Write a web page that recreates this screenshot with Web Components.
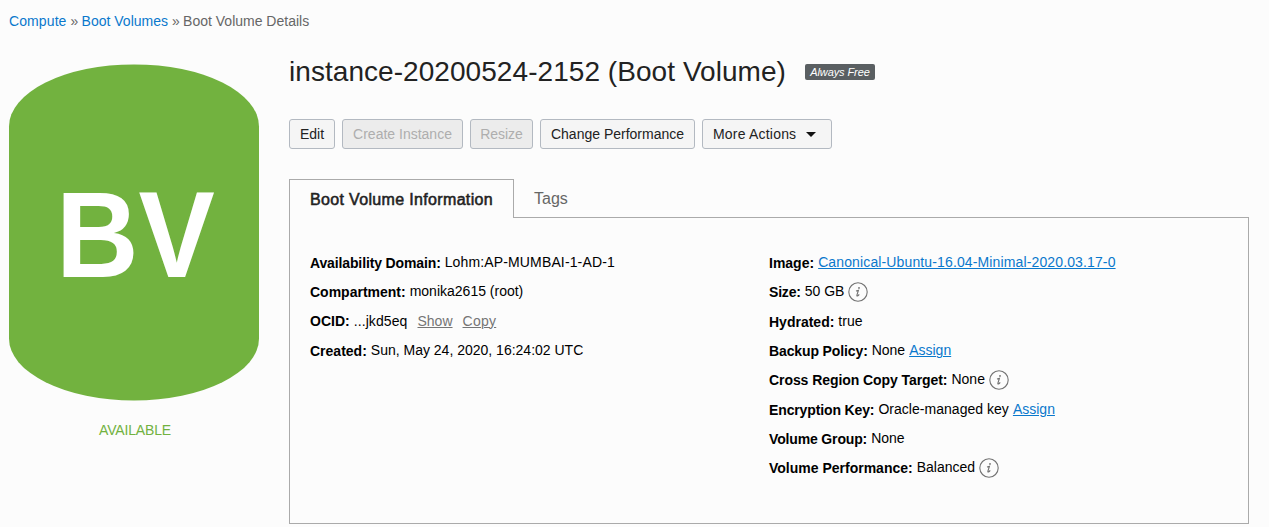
<!DOCTYPE html>
<html lang="en">
<head>
<meta charset="utf-8">
<title>Boot Volume Details</title>
<style>
html,body{margin:0;height:527px;overflow:hidden;background:#fcfcfc}
body{font:14px/20px "Liberation Sans",Arial,sans-serif;color:#000}
</style>
</head>
<body>
<volume-page></volume-page>
<script>
function define(name, html, setup) {
  const template = document.createElement('template');
  template.innerHTML = html;
  customElements.define(name, class extends HTMLElement {
    constructor() {
      super();
      this.attachShadow({mode: 'open'}).append(template.content.cloneNode(true));
    }
    connectedCallback() { if (setup) setup(this, this.shadowRoot); }
  });
}

define('text-link', `<style>
:host{display:inline-block;color:#0a78cc}
:host([underlined]){text-decoration:underline;text-decoration-thickness:1px;text-underline-offset:1px}
:host([muted]){color:#757575}
</style><slot></slot>`);

define('bread-crumbs', `<style>
:host{display:flex;gap:4px;height:20px;color:#666;white-space:nowrap}
</style><slot></slot>`);

define('resource-badge', `<style>
:host{display:flex;flex-direction:column;width:250px}
.shape{height:336px;background:#72b23f;border-radius:125px/62px;transform:translateY(-.6px);display:flex;align-items:center;justify-content:center;color:#fff;font:bold 123px/140px "Liberation Sans",Arial,sans-serif}
.shape span{margin-top:5px;margin-left:2px;transform:scaleX(.93)}
.state{margin-top:19px;text-align:center;color:#72b23f;padding-left:2px;letter-spacing:-.16px}
</style><div class="shape"><span><slot></slot></span></div><div class="state"><slot name="state"></slot></div>`);

define('free-tag', `<style>
:host{display:block;box-sizing:border-box;width:70px;height:16px;border-radius:2px;background:#5a5f62;color:#fff;font:italic 11px/16px "Liberation Sans",Arial,sans-serif;letter-spacing:-.1px;text-align:center;white-space:nowrap}
</style><slot></slot>`);

define('action-button', `<style>
:host{display:block}
button{display:flex;align-items:center;justify-content:center;box-sizing:border-box;width:var(--w);height:30px;padding:0;border:1px solid #b3b9c1;border-radius:3px;background:#f5f5f5;color:#222;font:inherit;letter-spacing:inherit;white-space:nowrap}
:host([disabled]) button{background:#ececec;color:#aeaeae}
svg{display:none;margin-left:10px}
:host([menu]) svg{display:block}
:host([menu]) button{justify-content:flex-start;padding-left:10px}
</style><button><slot></slot><svg width="10" height="5" viewBox="0 0 10 5"><path d="M0 0h10L5 5z" fill="#111"/></svg></button>`, (host, root) => {
  root.querySelector('button').disabled = host.hasAttribute('disabled');
});

define('info-icon', `<style>
:host{display:block;width:20px;height:20px;margin-top:1px}svg{display:block}
</style><svg width="20" height="20" viewBox="0 0 20 20" fill="none" stroke="#737373"><circle cx="10" cy="10" r="9.2" stroke-width="1.1"/><path d="M8 9 10.4 8.3 9 12.8q-.4 1.4.4 1.2.9-.3 1.8-1.6" stroke-width="1.15"/><circle cx="11" cy="5.9" r=".95" fill="#737373" stroke="none"/></svg>`);

define('detail-row', `<style>
:host{display:flex;height:29.33px;gap:4px;white-space:nowrap;align-items:flex-start}
.label{font-weight:bold;padding-top:var(--drop,1px);letter-spacing:var(--ls,0)}
.value{display:flex;gap:4px}
</style><span class="label"><slot name="label"></slot></span><span class="value"><slot></slot></span>`);

define('tab-panel', `<style>
:host{display:flex;flex-direction:column;width:960px;height:345px}
.tabs{display:flex;height:39px;font-size:16px;line-height:38px}
.active{box-sizing:border-box;width:225px;height:39px;border:1px solid #aaa;border-bottom:0;padding:1px 0 0 20px;color:#222;-webkit-text-stroke:.55px #222;letter-spacing:.34px;white-space:nowrap}
.rest{flex:1;box-sizing:border-box;border-bottom:1px solid #aaa;padding:1px 0 0 20px;height:39px;color:#666}
.body{flex:1;display:flex;border:1px solid #aaa;border-top:0;padding:34px 20px 0}
.col{width:459px}
</style>
<div class="tabs"><div class="active"><slot name="active"></slot></div><div class="rest"><slot name="tab"></slot></div></div>
<div class="body"><div class="col"><slot name="left"></slot></div><div class="col"><slot name="right"></slot></div></div>`);

define('volume-page', `<style>
:host{display:block;padding:11px 0 0 9px}
.layout{display:flex;gap:30px;margin-top:25px}
resource-badge{margin-top:9px}
main{display:flex;flex-direction:column;margin-top:-4px}
.title{display:flex;align-items:center;height:40px}
h1{margin:0;width:516px;font-weight:normal;font-size:28px;line-height:40px;letter-spacing:.055px;color:#222;white-space:nowrap}
.actions{display:flex;gap:7px;margin:27px 0 30px}
</style>
<bread-crumbs><text-link style="letter-spacing:.1px">Compute</text-link><span style="letter-spacing:-.7px">»</span><text-link>Boot Volumes</text-link><span style="letter-spacing:-.7px">»</span><span>Boot Volume Details</span></bread-crumbs>
<div class="layout">
<resource-badge>BV<span slot="state">AVAILABLE</span></resource-badge>
<main>
<div class="title"><h1>instance-20200524-2152 (Boot Volume)</h1><free-tag>Always Free</free-tag></div>
<div class="actions">
<action-button style="--w:46px">Edit</action-button>
<action-button style="--w:121px" disabled>Create Instance</action-button>
<action-button style="--w:63px;letter-spacing:-.05px" disabled>Resize</action-button>
<action-button style="--w:155px">Change Performance</action-button>
<action-button style="--w:130px;letter-spacing:.2px" menu>More Actions</action-button>
</div>
<tab-panel>
<span slot="active">Boot Volume Information</span><span slot="tab">Tags</span>
<div slot="left">
<detail-row style="--ls:-.13px"><span slot="label">Availability Domain:</span><span style="letter-spacing:.14px">Lohm:AP-MUMBAI-1-AD-1</span></detail-row>
<detail-row><span slot="label">Compartment:</span><span>monika2615 (root)</span></detail-row>
<detail-row style="--drop:0px"><span slot="label">OCID:</span><span style="letter-spacing:.1px">...jkd5eq</span><text-link underlined muted style="margin-left:6px">Show</text-link><text-link underlined muted style="margin-left:6px;letter-spacing:.25px">Copy</text-link></detail-row>
<detail-row><span slot="label">Created:</span><span>Sun, May 24, 2020, 16:24:02 UTC</span></detail-row>
</div>
<div slot="right">
<detail-row><span slot="label">Image:</span><text-link underlined style="letter-spacing:.13px">Canonical-Ubuntu-16.04-Minimal-2020.03.17-0</text-link></detail-row>
<detail-row style="--ls:-.2px"><span slot="label">Size:</span><span>50 GB</span><info-icon></info-icon></detail-row>
<detail-row><span slot="label">Hydrated:</span><span>true</span></detail-row>
<detail-row style="--ls:-.12px"><span slot="label">Backup Policy:</span><span>None</span><text-link underlined>Assign</text-link></detail-row>
<detail-row style="--ls:-.07px"><span slot="label">Cross Region Copy Target:</span><span>None</span><info-icon></info-icon></detail-row>
<detail-row style="--ls:-.13px"><span slot="label">Encryption Key:</span><span style="letter-spacing:.03px">Oracle-managed key</span><text-link underlined>Assign</text-link></detail-row>
<detail-row style="--ls:-.15px"><span slot="label">Volume Group:</span><span>None</span></detail-row>
<detail-row><span slot="label">Volume Performance:</span><span>Balanced</span><info-icon></info-icon></detail-row>
</div>
</tab-panel>
</main>
</div>`);
</script>
</body>
</html>
